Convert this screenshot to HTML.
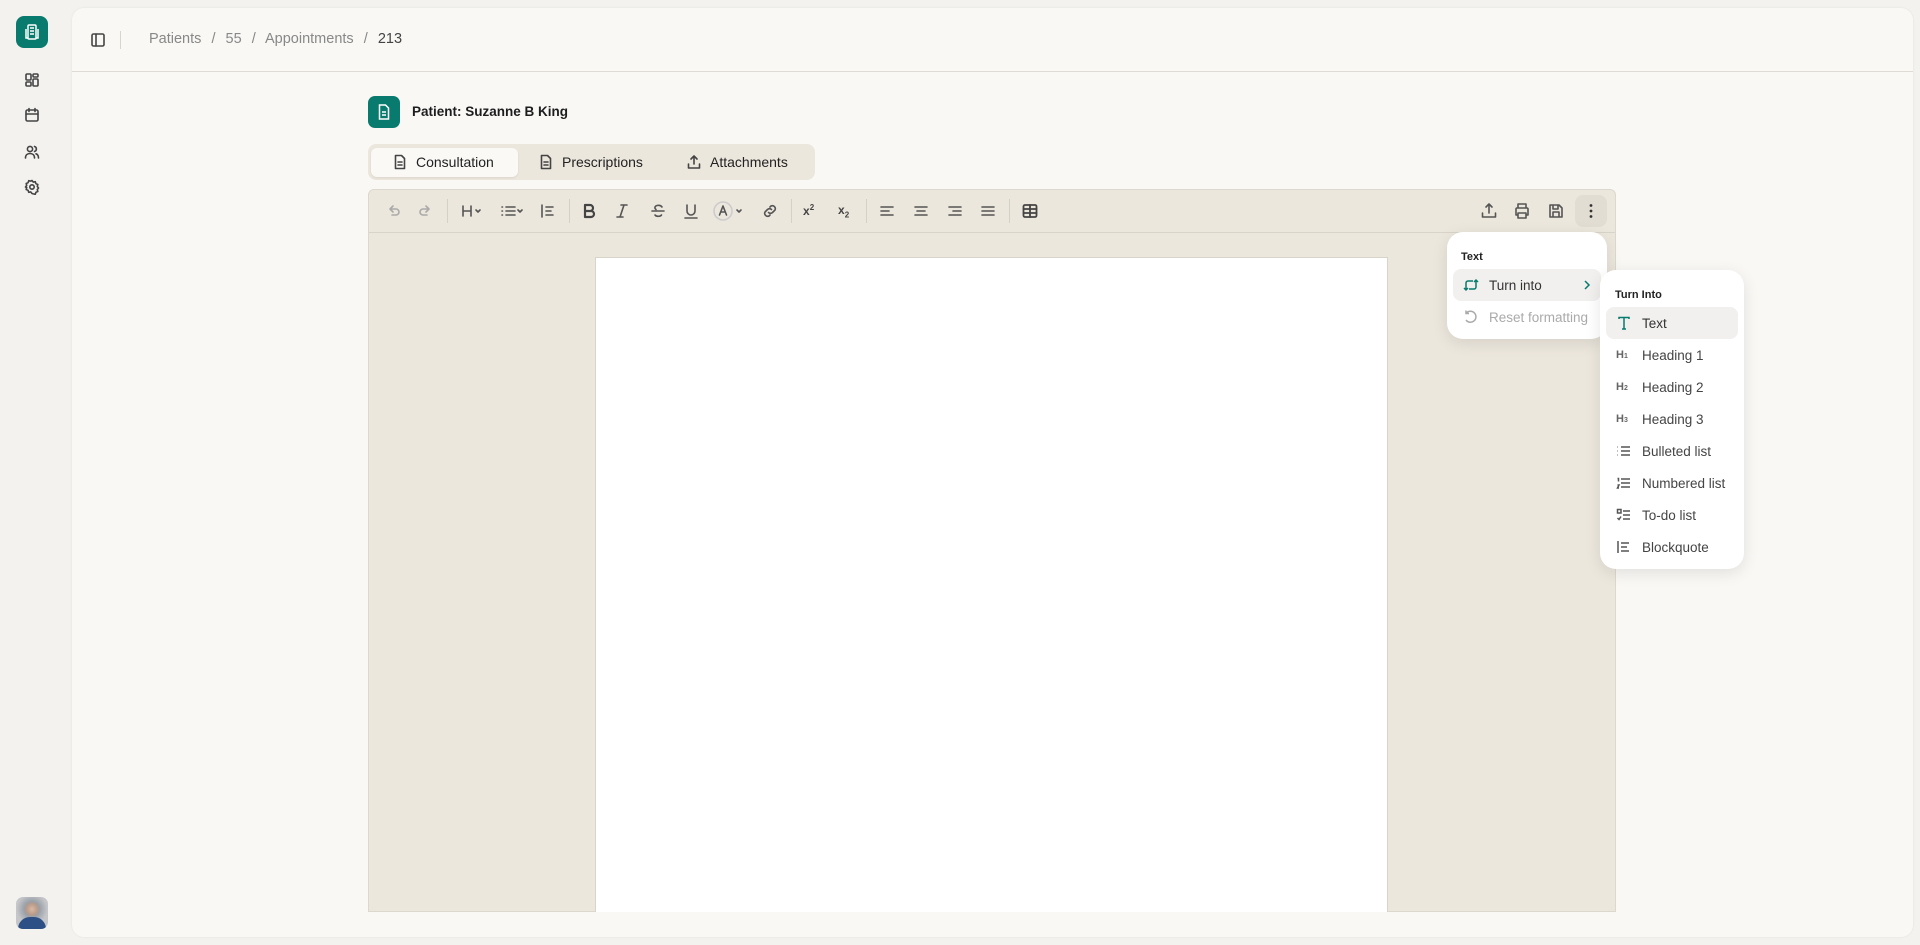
<!DOCTYPE html>
<html><head><meta charset="utf-8"><style>
*{box-sizing:border-box;margin:0;padding:0}
body{width:1920px;height:945px;background:#f3f2ee;font-family:"Liberation Sans",sans-serif;position:relative;overflow:hidden;color:#222}
.a{position:absolute}
svg{display:block}
.ic{stroke:#444;fill:none;stroke-width:1.6;stroke-linecap:round;stroke-linejoin:round}
.tb{position:absolute;top:201px;width:20px;height:20px}
.tb svg{stroke:#555;fill:none;stroke-width:1.6;stroke-linecap:round;stroke-linejoin:round}
.sep{position:absolute;top:199px;width:1px;height:24px;background:#d6d1c6}
.mi{position:absolute;left:6px;right:6px;height:32px;display:flex;align-items:center;padding-left:10px;font-size:13.5px;color:#444;border-radius:8px}
.mi svg{margin-right:10px;stroke:#555;fill:none;stroke-width:1.5}
</style></head><body>
<!-- sidebar -->
<div class="a" style="left:16px;top:16px;width:32px;height:32px;background:#087a6e;border-radius:8px">
<svg width="32" height="32" viewBox="0 0 32 32"><g stroke="#fff" fill="none" stroke-width="1.5"><rect x="12" y="9" width="8" height="14" rx="1"/><path d="M10 13v9h2M22 13v9h-2M14 12h4M14 15h4M14 18h4"/></g></svg></div>
<svg class="a ic" style="left:24px;top:72px" width="16" height="16" viewBox="0 0 16 16"><rect x="2" y="2" width="5" height="6" rx="1"/><rect x="9" y="2" width="5" height="3" rx="1"/><rect x="9" y="7" width="5" height="7" rx="1"/><rect x="2" y="10" width="5" height="4" rx="1"/></svg>
<svg class="a ic" style="left:24px;top:107px" width="16" height="16" viewBox="0 0 16 16"><rect x="2" y="3" width="12" height="11" rx="1.5"/><path d="M2 7h12M5 1.5v3M11 1.5v3"/></svg>
<svg class="a ic" style="left:24px;top:144px" width="16" height="16" viewBox="0 0 16 16"><circle cx="6" cy="5" r="2.6"/><path d="M1.5 14c0-3 2-4.5 4.5-4.5s4.5 1.5 4.5 4.5M10.5 2.5a2.6 2.6 0 010 5M12 9.8c1.6.5 2.5 2 2.5 4.2"/></svg>
<svg class="a ic" style="left:24px;top:179px" width="16" height="16" viewBox="0 0 16 16"><circle cx="8" cy="8" r="2.2"/><path d="M8 1.5l1.3 1.6 2-.4.6 2 1.9.8-.5 2 1.2 1.5-1.2 1.5.5 2-1.9.8-.6 2-2-.4L8 14.5l-1.3-1.6-2 .4-.6-2-1.9-.8.5-2L1.5 8l1.2-1.5-.5-2 1.9-.8.6-2 2 .4z"/></svg>
<div class="a" style="left:16px;top:897px;width:32px;height:32px;border-radius:7px;background:radial-gradient(circle at 50% 38%,#d9b9a5 0,#b89a88 22%,#9aa0a8 30%,#c4c6c9 60%);overflow:hidden"><div class="a" style="left:2px;top:20px;width:28px;height:14px;border-radius:12px 12px 0 0;background:#2c4f86"></div></div>
<!-- card -->
<div class="a" style="left:72px;top:8px;width:1841px;height:929px;background:#f9f8f5;border-radius:12px;box-shadow:0 0 2px rgba(0,0,0,.08)"></div>
<div class="a" style="left:72px;top:71px;width:1841px;height:1px;background:#dedbd4"></div>
<svg class="a ic" style="left:90px;top:32px" width="16" height="16" viewBox="0 0 16 16"><rect x="2" y="2" width="12" height="12" rx="1.5"/><path d="M6 2v12"/></svg>
<div class="a" style="left:120px;top:31px;width:1px;height:18px;background:#d8d5ce"></div>
<div class="a" style="left:149px;top:31px;font-size:14.5px;color:#888;white-space:pre;word-spacing:1px">Patients  /  55  /  Appointments  /  <span style="color:#444">213</span></div>
<!-- patient -->
<div class="a" style="left:368px;top:96px;width:32px;height:32px;background:#087a6e;border-radius:7px"><svg width="32" height="32" viewBox="0 0 32 32"><g stroke="#fff" fill="none" stroke-width="1.5"><path d="M11.5 9h6l3 3v11h-9z"/><path d="M14 16h4M14 19h4"/></g></svg></div>
<div class="a" style="left:412px;top:104px;font-size:13.5px;font-weight:bold;color:#1d1d1d">Patient: Suzanne B King</div>
<!-- tabs -->
<div class="a" style="left:368px;top:144px;width:447px;height:36px;background:#ece7dd;border-radius:8px"></div>
<div class="a" style="left:371px;top:148px;width:147px;height:29px;background:#faf9f6;border-radius:6px;box-shadow:0 1px 2px rgba(0,0,0,.08)"></div>
<svg class="a ic" style="left:392px;top:154px" width="16" height="16" viewBox="0 0 16 16"><path d="M3.5 1.5h6l3 3v10h-9z M6 8h4M6 11h4"/></svg>
<div class="a" style="left:416px;top:154px;font-size:14px;color:#222">Consultation</div>
<svg class="a ic" style="left:538px;top:154px" width="16" height="16" viewBox="0 0 16 16"><path d="M3.5 1.5h6l3 3v10h-9z M6 8h4M6 11h4"/></svg>
<div class="a" style="left:562px;top:154px;font-size:14px;color:#222">Prescriptions</div>
<svg class="a ic" style="left:686px;top:154px" width="16" height="16" viewBox="0 0 16 16"><path d="M2.5 10v4h11v-4M8 2v8M5 5l3-3 3 3"/></svg>
<div class="a" style="left:710px;top:154px;font-size:14px;color:#222">Attachments</div>
<!-- editor -->
<div class="a" style="left:368px;top:189px;width:1248px;height:723px;background:#ece7dd;border:1px solid #ddd8cd;border-radius:6px 6px 0 0"></div>
<div class="a" style="left:369px;top:232px;width:1246px;height:1px;background:#d9d4c9"></div>
<div class="a" style="left:595px;top:257px;width:793px;height:655px;background:#fff;border:1px solid #d9d4c9;border-bottom:none"></div>
<!-- toolbar -->
<div class="tb" style="left:383px"><svg width="20" height="20" viewBox="0 0 20 20" style="stroke:#aaa"><path d="M7 8h6a3 3 0 010 6H9M7 8l3-3M7 8l3 3"/></svg></div>
<div class="tb" style="left:416px"><svg width="20" height="20" viewBox="0 0 20 20" style="stroke:#aaa"><path d="M13 8H7a3 3 0 000 6h4M13 8l-3-3M13 8l-3 3"/></svg></div>
<div class="sep" style="left:447px"></div>
<div class="tb" style="left:460px;width:26px"><svg width="26" height="20" viewBox="0 0 26 20"><path d="M3 5v10M11 5v10M3 10h8M16 9l2 2 2-2"/></svg></div>
<div class="tb" style="left:500px;width:26px"><svg width="26" height="20" viewBox="0 0 26 20"><path d="M2 6h.5M2 10h.5M2 14h.5M6 6h9M6 10h9M6 14h9M18 9l2 2 2-2"/></svg></div>
<div class="tb" style="left:538px"><svg width="20" height="20" viewBox="0 0 20 20"><path d="M4 4v12M8 6h7M8 10h5M8 14h7"/></svg></div>
<div class="sep" style="left:569px"></div>
<div class="tb" style="left:579px"><svg width="20" height="20" viewBox="0 0 20 20" style="stroke-width:2.2;stroke:#444"><path d="M6 4h5a3 3 0 010 6H6zM6 10h6a3 3 0 010 6H6z"/></svg></div>
<div class="tb" style="left:612px"><svg width="20" height="20" viewBox="0 0 20 20"><path d="M9 4h6M5 16h6M12 4l-4 12"/></svg></div>
<div class="tb" style="left:648px"><svg width="20" height="20" viewBox="0 0 20 20"><path d="M14 6c-1-1.5-3-2-5-1.5S6 7 8 8.5M4 10h12M7 14c1 1.5 5 2 6.5 0"/></svg></div>
<div class="tb" style="left:681px"><svg width="20" height="20" viewBox="0 0 20 20"><path d="M6 4v6a4 4 0 008 0V4M4 17h12"/></svg></div>
<div class="tb" style="left:713px;width:32px"><svg width="32" height="20" viewBox="0 0 32 20"><circle cx="10" cy="10" r="9" style="stroke:#ccc"/><path d="M6.5 14l3.5-9 3.5 9M7.8 11h4.4M24 9l2 2 2-2"/></svg></div>
<div class="tb" style="left:760px"><svg width="20" height="20" viewBox="0 0 20 20"><path d="M8.5 11.5a3 3 0 004 0l2.5-2.5a3 3 0 00-4-4l-1 1M11.5 8.5a3 3 0 00-4 0L5 11a3 3 0 004 4l1-1"/></svg></div>
<div class="sep" style="left:791px"></div>
<div class="tb" style="left:803px;font-size:12px;color:#444;font-weight:bold;top:203px">x<sup style="font-size:8px">2</sup></div>
<div class="tb" style="left:838px;font-size:12px;color:#444;font-weight:bold;top:203px">x<sub style="font-size:8px">2</sub></div>
<div class="sep" style="left:866px"></div>
<div class="tb" style="left:877px"><svg width="20" height="20" viewBox="0 0 20 20"><path d="M4 6h12M4 10h8M4 14h12"/></svg></div>
<div class="tb" style="left:911px"><svg width="20" height="20" viewBox="0 0 20 20"><path d="M4 6h12M6 10h8M4 14h12"/></svg></div>
<div class="tb" style="left:945px"><svg width="20" height="20" viewBox="0 0 20 20"><path d="M4 6h12M8 10h8M4 14h12"/></svg></div>
<div class="tb" style="left:978px"><svg width="20" height="20" viewBox="0 0 20 20"><path d="M4 6h12M4 10h12M4 14h12"/></svg></div>
<div class="sep" style="left:1009px"></div>
<div class="tb" style="left:1020px"><svg width="20" height="20" viewBox="0 0 20 20" style="stroke:#444;stroke-width:1.8"><rect x="3.5" y="4" width="13" height="12" rx="1.5"/><path d="M3.5 8h13M3.5 12h13M10 4v12"/></svg></div>
<div class="tb" style="left:1479px"><svg width="20" height="20" viewBox="0 0 20 20"><path d="M3.5 12v4h13v-4M10 3v9M7 6l3-3 3 3"/></svg></div>
<div class="tb" style="left:1512px"><svg width="20" height="20" viewBox="0 0 20 20"><path d="M6 7V3h8v4M6 14H4v-6a1 1 0 011-1h10a1 1 0 011 1v6h-2M6 12h8v5H6z"/></svg></div>
<div class="tb" style="left:1546px"><svg width="20" height="20" viewBox="0 0 20 20"><path d="M4 4h9l3 3v9H4zM7 4v4h5V4M7 16v-5h6v5"/></svg></div>
<div class="a" style="left:1575px;top:195px;width:32px;height:32px;background:#e2ddd2;border-radius:8px"><svg width="32" height="32" viewBox="0 0 32 32"><g fill="#333"><circle cx="16" cy="10.5" r="1.4"/><circle cx="16" cy="16" r="1.4"/><circle cx="16" cy="21.5" r="1.4"/></g></svg></div>
<!-- menu 1 -->
<div class="a" style="left:1447px;top:232px;width:160px;height:107px;background:#fff;border-radius:16px;box-shadow:0 4px 16px rgba(0,0,0,.1)">
<div class="a" style="left:14px;top:19px;font-size:11px;font-weight:bold;color:#222">Text</div>
<div class="mi" style="top:37px;background:#f1f0ee;color:#333"><svg width="16" height="16" viewBox="0 0 16 16" style="stroke:#087a6e"><path d="M3 13V6a2 2 0 012-2h5M1 11l2 2 2-2M13 3v7a2 2 0 01-2 2H6M11 5l2-2 2 2"/></svg>Turn into<svg class="a" style="right:6px;left:auto;top:8px;margin:0;stroke:#087a6e" width="16" height="16" viewBox="0 0 16 16"><path d="M6 4l4 4-4 4"/></svg></div>
<div class="mi" style="top:69px;color:#aaa"><svg width="16" height="16" viewBox="0 0 16 16" style="stroke:#aaa"><path d="M3 4.5A5.5 5.5 0 113 11M3 1.5v3h3"/></svg>Reset formatting</div>
</div>
<!-- menu 2 -->
<div class="a" style="left:1600px;top:270px;width:144px;height:299px;background:#fff;border-radius:16px;box-shadow:0 4px 16px rgba(0,0,0,.1)">
<div class="a" style="left:15px;top:19px;font-size:11px;font-weight:bold;color:#222">Turn Into</div>
<div class="mi" style="top:37px;background:#f1f0ee;color:#333"><svg width="16" height="16" viewBox="0 0 16 16" style="stroke:#087a6e"><path d="M3 4V2.5h10V4M8 2.5V14M6 14h4"/></svg>Text</div>
<div class="mi" style="top:69px"><span style="font-size:11px;font-weight:bold;color:#666;width:16px;margin-right:10px">H<small style="font-size:7px">1</small></span>Heading 1</div>
<div class="mi" style="top:101px"><span style="font-size:11px;font-weight:bold;color:#666;width:16px;margin-right:10px">H<small style="font-size:7px">2</small></span>Heading 2</div>
<div class="mi" style="top:133px"><span style="font-size:11px;font-weight:bold;color:#666;width:16px;margin-right:10px">H<small style="font-size:7px">3</small></span>Heading 3</div>
<div class="mi" style="top:165px"><svg width="16" height="16" viewBox="0 0 16 16"><path d="M1.5 4h.5M1.5 8h.5M1.5 12h.5M5 4h9M5 8h9M5 12h9"/></svg>Bulleted list</div>
<div class="mi" style="top:197px"><svg width="16" height="16" viewBox="0 0 16 16"><path d="M1.5 3.5h1v3M1.5 10h1.5l-1.5 3h1.5M5 4h9M5 8h9M5 12h9"/></svg>Numbered list</div>
<div class="mi" style="top:229px"><svg width="16" height="16" viewBox="0 0 16 16"><rect x="1.5" y="2.5" width="3.5" height="3.5"/><path d="M1.5 11l1.5 1.5 2-3M7 4h7M7 8h7M7 12h7"/></svg>To-do list</div>
<div class="mi" style="top:261px"><svg width="16" height="16" viewBox="0 0 16 16"><path d="M2 2v12M5 4h8M5 8h6M5 12h8"/></svg>Blockquote</div>
</div>
</body></html>
